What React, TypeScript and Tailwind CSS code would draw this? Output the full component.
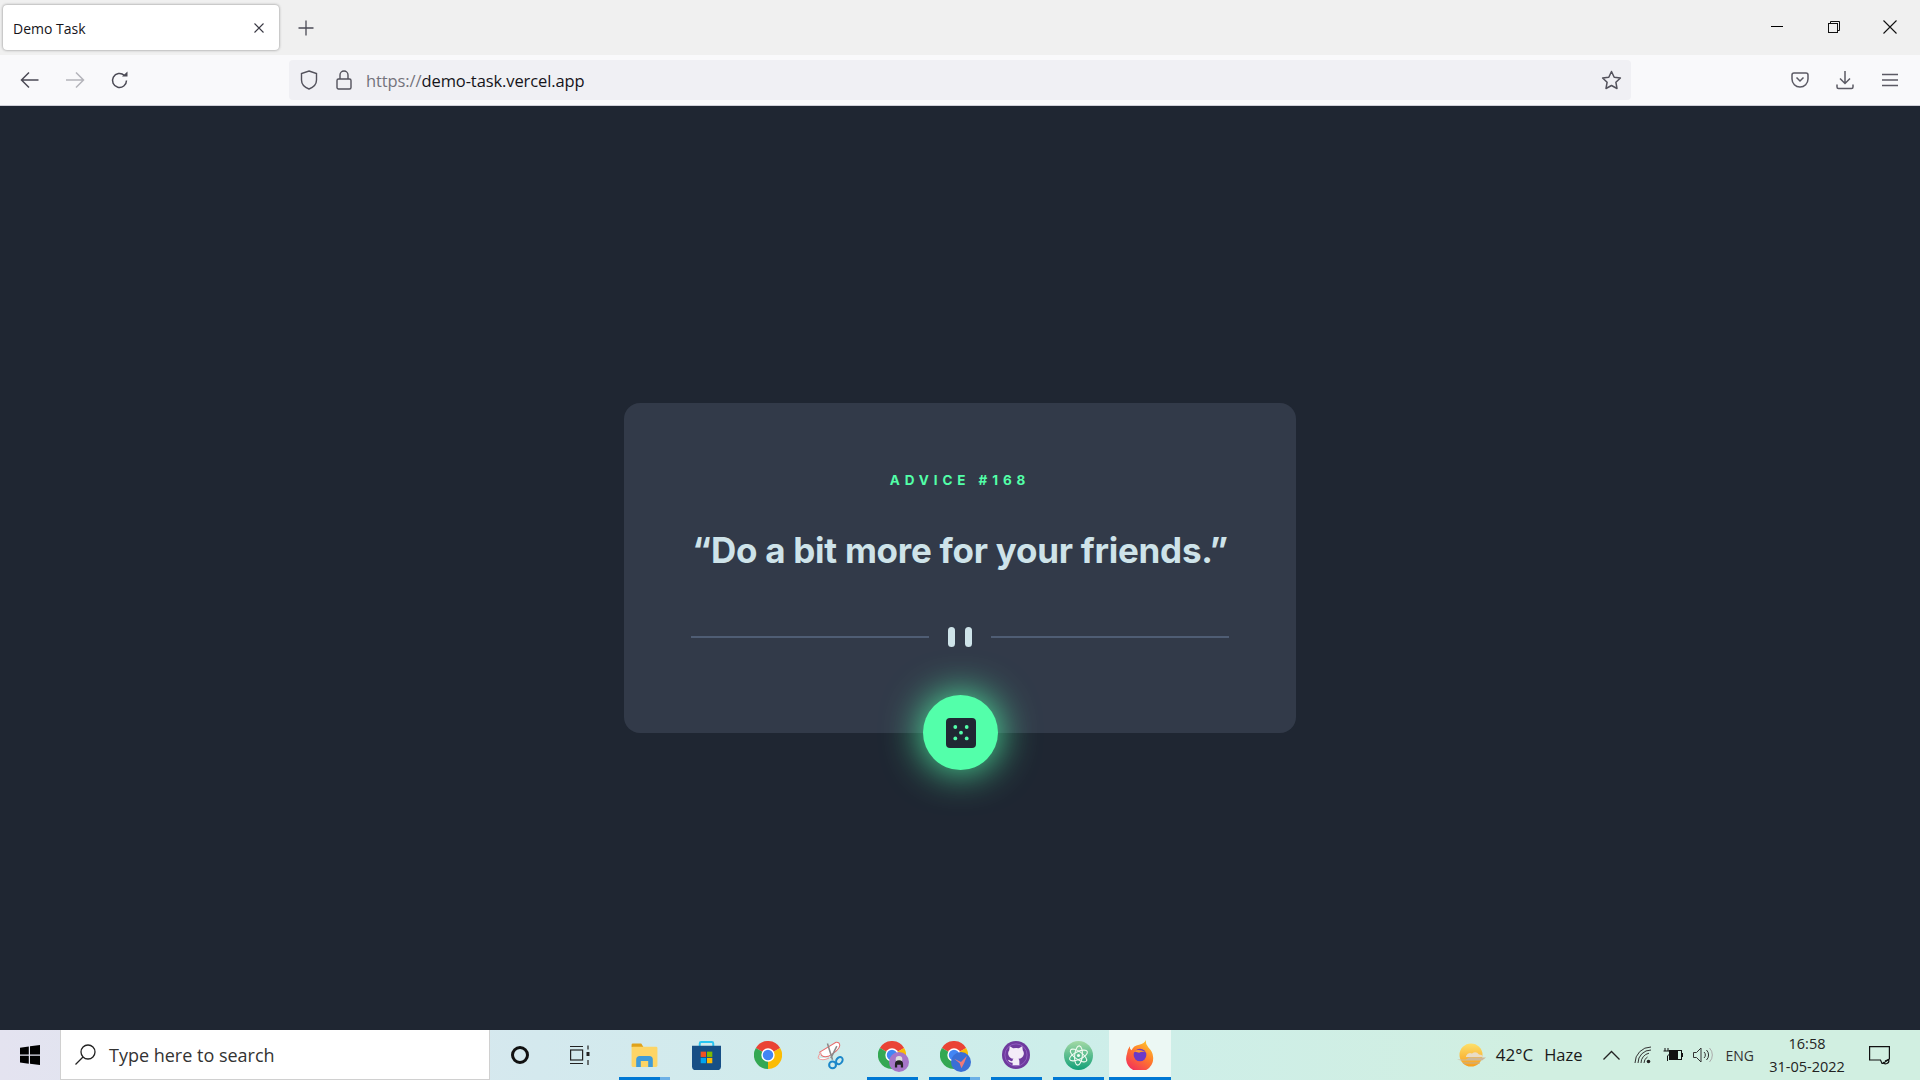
import React from "react";

const ui = "font-['Open_Sans','Noto_Sans',sans-serif]";

function Chrome({ size = 28 }: { size?: number }) {
  return (
    <svg width={size} height={size} viewBox="0 0 48 48">
      <path d="M24 24 L44.8 12 A24 24 0 0 0 3.2 12 Z" fill="#ea4335" />
      <path d="M24 24 L3.2 12 A24 24 0 0 0 24 48 Z" fill="#34a853" />
      <path d="M24 24 L24 48 A24 24 0 0 0 44.8 12 Z" fill="#fbbc04" />
      <circle cx="24" cy="24" r="11.5" fill="#fff" />
      <circle cx="24" cy="24" r="9" fill="#4285f4" />
    </svg>
  );
}

function Folder() {
  return (
    <svg width="27" height="24" viewBox="0 0 28 26">
      <path d="M0 2a1.5 1.5 0 0 1 1.5-1.5h9L13 4.5H0z" fill="#e0a21a" />
      <rect x="0" y="4" width="28" height="22" rx="1.5" fill="#fdd566" />
      <path d="M5 26v-8a4 4 0 0 1 4-4h10a4 4 0 0 1 4 4v8h-5v-6.5h-8V26z" fill="#3f9bd8" />
    </svg>
  );
}

function Store() {
  return (
    <svg width="29" height="29" viewBox="0 0 30 30">
      <path d="M8 6V2.500A1.500 1.500 0 0 1 9.500 1h11A1.500 1.500 0 0 1 22 2.500V6" fill="none" stroke="#28c5f2" strokeWidth="2" />
      <path d="M0 5h30v21a4 4 0 0 1-4 4H4a4 4 0 0 1-4-4z" fill="#174f86" />
      <rect x="9" y="11" width="5.500" height="5.500" fill="#f25022" />
      <rect x="15.500" y="11" width="5.500" height="5.500" fill="#7fba00" />
      <rect x="9" y="17.500" width="5.500" height="5.500" fill="#00a4ef" />
      <rect x="15.500" y="17.500" width="5.500" height="5.500" fill="#ffb900" />
    </svg>
  );
}

function Snip() {
  return (
    <svg width="28" height="29" viewBox="0 0 30 34">
      <path d="M3 13 L22 1.500 Q26 1 26.500 5 Q26 11 13 18 Q5 20 3 13Z" fill="#fff" stroke="#e66a6a" strokeWidth="1.200" />
      <path d="M1 20 Q2 15 5 14 M1 20 Q6 24 14 20" fill="#fff" stroke="#eba0a0" strokeWidth="1.200" />
      <path d="M12 3 L18 22 M23 6 L16 20" stroke="#8a8a8a" strokeWidth="1.800" />
      <circle cx="18" cy="28" r="4" fill="none" stroke="#1b87c9" strokeWidth="2.400" />
      <ellipse cx="26" cy="23" rx="3.400" ry="4.500" fill="none" stroke="#1b87c9" strokeWidth="2.400" transform="rotate(35 26 23)" />
    </svg>
  );
}

function ChromeBadge({ kind }: { kind: "ghost" | "bird" }) {
  return (
    <div className="relative w-[31px] h-[31px] mt-[3px] translate-x-[1px]">
      <Chrome size={28} />
      {kind === "ghost" ? (
        <svg className="absolute right-0 bottom-0" width="20" height="20" viewBox="0 0 22 22">
          <circle cx="11" cy="11" r="11" fill="#a676c8" />
          <circle cx="11" cy="8" r="3.600" fill="#ddd" />
          <path d="M6.500 17v-3.500a4.500 4.500 0 0 1 9 0V17h-2.500v-3h-4v3z" fill="#222" />
        </svg>
      ) : (
        <svg className="absolute right-0 bottom-0" width="20" height="20" viewBox="0 0 22 22">
          <circle cx="11" cy="11" r="11" fill="#3a6fd6" />
          <path d="M3.500 7.500 L11 11 L17.500 4.500 L14.500 12 L11.500 18 L9.500 12.500Z" fill="#ee7a7a" />
        </svg>
      )}
    </div>
  );
}

function Github() {
  return (
    <svg width="28" height="28" viewBox="0 0 29 29">
      <circle cx="14.500" cy="14.500" r="14.500" fill="#6e3a9e" />
      <circle cx="14.500" cy="14.500" r="11.500" fill="none" stroke="#8f5cc0" strokeWidth="1" />
      <path d="M8 5.500 L11.500 7.500 Q14.500 6.800 17.500 7.500 L21 5.500 L21.500 9.500 Q23 11.500 22.500 14 Q21.500 18 17 18.500 Q18 19.500 18 21 V25 H11 V22.500 Q7.500 23 6 19.500 Q8 20 9.500 21 L11 20.500 V20 Q11 19 12 18.500 Q7.500 18 6.500 14 Q6 11.500 7.500 9.500Z" fill="#f3ecf8" />
    </svg>
  );
}

function Atom() {
  return (
    <svg width="29" height="29" viewBox="0 0 30 30">
      <defs>
        <linearGradient id="atomg" x1="0" y1="0" x2="0" y2="1">
          <stop offset="0" stopColor="#a3d9a5" />
          <stop offset="1" stopColor="#12a078" />
        </linearGradient>
      </defs>
      <circle cx="15" cy="15" r="15" fill="url(#atomg)" />
      <g fill="none" stroke="#f2fbf2" strokeWidth="1.100">
        <ellipse cx="15" cy="15" rx="10" ry="4" transform="rotate(-25 15 15)" />
        <ellipse cx="15" cy="15" rx="10" ry="4" transform="rotate(35 15 15)" />
        <ellipse cx="15" cy="15" rx="10" ry="4" transform="rotate(95 15 15)" />
      </g>
      <circle cx="15" cy="15" r="1.600" fill="#f2fbf2" />
    </svg>
  );
}

function Firefox() {
  return (
    <svg width="28" height="30" viewBox="0 0 30 32">
      <defs>
        <linearGradient id="ffg" x1="0.800" y1="0" x2="0.200" y2="1">
          <stop offset="0" stopColor="#ffcb2e" />
          <stop offset="0.450" stopColor="#ff7a2c" />
          <stop offset="1" stopColor="#f22c5e" />
        </linearGradient>
      </defs>
      <path d="M21 0 Q21 5 24 8 Q29 13 29 18 A14.500 14 0 1 1 1 15 Q1 11 4 6.500 Q4 10 6 11 Q8 6 14 5 Q20 4 21 0Z" fill="url(#ffg)" />
      <circle cx="15" cy="16" r="6.800" fill="#6a3ac7" />
      <path d="M8 12 Q14 9 21 13 Q17 12 14 13.500 Q11 13 8 12Z" fill="#ff9a2e" />
    </svg>
  );
}

function Weather() {
  return (
    <svg width="30" height="25" viewBox="0 0 30 25">
      <defs>
        <linearGradient id="sun" x1="0" y1="0" x2="0" y2="1">
          <stop offset="0" stopColor="#fde06a" />
          <stop offset="1" stopColor="#f89e1c" />
        </linearGradient>
      </defs>
      <circle cx="14" cy="12" r="11.500" fill="url(#sun)" />
      <path d="M9 13 Q11 9 15 10.500 Q19 7.500 22 11.500 Q26 11.500 26 14 H9Z" fill="#e9dcc6" />
      <path d="M0 16.500 H9 Q12 13.500 16 14.500 H29 L25 17.500 H4Z" fill="#cdb89a" />
      <path d="M6 20 H23" stroke="#bfae94" strokeWidth="1" />
    </svg>
  );
}

function Tile({ children, bar, active }: { children: React.ReactNode; bar?: "plain" | "split"; active?: boolean }) {
  return (
    <div className={`relative w-[62px] h-full flex items-center justify-center ${active ? "bg-[#ecf8f4]" : ""}`}>
      {children}
      {bar === "plain" && <div className="absolute bottom-0 left-[6px] w-[51px] h-[3px] bg-[#0078d4]" />}
      {bar === "split" && (
        <div className="absolute bottom-0 left-[6px] w-[51px] h-[3px] flex">
          <div className="w-[41px] bg-[#0078d4]" />
          <div className="w-[10px] bg-[#6cb0e6]" />
        </div>
      )}
      {active && <div className="absolute bottom-0 inset-x-0 h-[3px] bg-[#0078d4]" />}
    </div>
  );
}

export default function App() {
  return (
    <div className={`w-full h-screen flex flex-col overflow-hidden bg-[#1f2632] ${ui}`}>
      {/* Tab strip */}
      <div className="h-[55px] shrink-0 bg-[#f0f0f0] flex items-start">
        <div className="mt-[5px] ml-[3px] w-[276px] h-[45px] bg-white rounded-[4px] shadow-[0_0_3px_rgba(0,0,0,0.45)] flex items-center pl-[10px] pr-[14px] justify-between">
          <span className="text-[14px] text-[#15141a] pt-[1px]">Demo Task</span>
          <svg width="12" height="12" viewBox="0 0 12 12" className="text-[#3a3944]">
            <path d="M1.500 1.500l9 9M10.500 1.500l-9 9" stroke="currentColor" strokeWidth="1.100" />
          </svg>
        </div>
        <div className="mt-[5px] ml-[10px] h-[45px] w-[34px] flex items-center justify-center">
          <svg width="16" height="16" viewBox="0 0 16 16">
            <path d="M8 0.500v15M0.500 8h15" stroke="#4a4a55" strokeWidth="1.300" />
          </svg>
        </div>
        <div className="ml-auto h-[53px] flex items-center pr-[2px]">
          <div className="w-[57px] flex justify-center">
            <div className="w-[12px] h-[1px] bg-black" />
          </div>
          <div className="w-[57px] flex justify-center">
            <svg width="12" height="12" viewBox="0 0 12 12" fill="none" stroke="#111" strokeWidth="1">
              <rect x="0.500" y="2.500" width="9" height="9" />
              <path d="M2.500 2.500v-2h9v9h-2" />
            </svg>
          </div>
          <div className="w-[56px] flex justify-center">
            <svg width="14" height="14" viewBox="0 0 14 14" stroke="#111" strokeWidth="1.100">
              <path d="M0.500 0.500l13 13M13.500 0.500l-13 13" />
            </svg>
          </div>
        </div>
      </div>

      {/* Navigation bar */}
      <div className="h-[51px] shrink-0 bg-[#f9f9fb] border-b border-[#cfcfd8] flex items-center">
        <div className="w-[289px] flex items-center pl-[20px]">
          <svg width="20" height="18" viewBox="0 0 20 18" fill="none" stroke="#4b4a55" strokeWidth="1.500">
            <path d="M1.500 9h17M9 1.500L1.500 9 9 16.500" />
          </svg>
          <svg className="ml-[25px]" width="20" height="18" viewBox="0 0 20 18" fill="none" stroke="#b4b4ba" strokeWidth="1.500">
            <path d="M1 9h17M11 1.500L18.500 9 11 16.500" />
          </svg>
          <svg className="ml-[25px]" width="19" height="19" viewBox="0 0 19 19" fill="none" stroke="#4b4a55" strokeWidth="1.500">
            <path d="M16.500 9.500a7 7 0 1 1-2.200-5.100" />
            <path d="M12 5.500h5.500V0.500z" fill="#4b4a55" stroke="none" />
          </svg>
        </div>
        <div className="w-[1342px] h-[40px] bg-[#f0f0f4] rounded-[4px] flex items-center pl-[11px] pr-[9px]">
          <svg width="18" height="20" viewBox="0 0 18 20" fill="none" stroke="#53525c" strokeWidth="1.400">
            <path d="M9 1l7.500 2.500V10c0 4.500-3.500 7.500-7.500 9-4-1.500-7.500-4.500-7.500-9V3.500z" />
          </svg>
          <svg className="ml-[18px]" width="16" height="20" viewBox="0 0 16 20" fill="none" stroke="#53525c" strokeWidth="1.400">
            <rect x="1" y="9" width="14" height="10" rx="1.500" />
            <path d="M4 9V5a4 4 0 0 1 8 0v4" />
          </svg>
          <div className="ml-[14px] pt-[2px] text-[16.500px] text-[#15141a] tracking-[-0.100px]">
            <span className="text-[#74737c]">https://</span>demo-task.vercel.app
          </div>
          <svg className="ml-auto" width="21" height="20" viewBox="0 0 21 20" fill="none" stroke="#53525c" strokeWidth="1.500" strokeLinejoin="round">
            <path d="M10.500 1.500l2.700 5.700 6.200.8-4.500 4.300 1.100 6.200-5.500-3-5.500 3 1.100-6.200L1.600 8l6.200-.8z" />
          </svg>
        </div>
        <div className="flex-1 flex items-center pl-[160px]">
          <svg width="18" height="16" viewBox="0 0 18 16" fill="none" stroke="#5b5a64" strokeWidth="1.500">
            <path d="M1 3a2 2 0 0 1 2-2h12a2 2 0 0 1 2 2v4a8 8 0 0 1-16 0z" />
            <path d="M5.500 5.500L9 9l3.500-3.500" />
          </svg>
          <svg className="ml-[27px]" width="18" height="20" viewBox="0 0 18 20" fill="none" stroke="#5b5a64" strokeWidth="1.500">
            <path d="M9 1v12M4 8.500L9 13.500l5-5" />
            <path d="M1 14.500v2.500a1.500 1.500 0 0 0 1.500 1.500h13a1.500 1.500 0 0 0 1.500-1.500v-2.500" />
          </svg>
          <svg className="ml-[28px]" width="16" height="14" viewBox="0 0 16 14" stroke="#5b5a64" strokeWidth="1.500">
            <path d="M0 1.500h16M0 7h16M0 12.500h16" />
          </svg>
        </div>
      </div>

      {/* Page */}
      <main className="flex-1 flex items-center justify-center bg-[#1f2632]">
        <div className="relative w-[672px] h-[330px] rounded-[16px] bg-[#323a49] flex flex-col items-center font-['Inter',sans-serif]">
          <div className="mt-[68px] text-[13.500px] leading-[18px] font-bold tracking-[4.900px] text-[#52ffa8]">ADVICE #168</div>
          <div className="mt-[36px] text-[35px] leading-[50px] font-bold tracking-[-0.250px] text-[#cee3e9]">“Do a bit more for your friends.”</div>
          <div className="mt-[52px] w-[538px] flex items-center justify-between">
            <div className="w-[238px] h-[2px] bg-[#4f5d74]" />
            <div className="flex gap-[10px]">
              <div className="w-[7px] h-[20px] rounded-[4px] bg-[#cee3e9]" />
              <div className="w-[7px] h-[20px] rounded-[4px] bg-[#cee3e9]" />
            </div>
            <div className="w-[238px] h-[2px] bg-[#4f5d74]" />
          </div>
          <button className="absolute bottom-[-37px] left-[299px] w-[75px] h-[75px] rounded-full bg-[#53ffaa] shadow-[0_0_40px_0_#53ffaa] flex items-center justify-center">
            <svg width="30" height="30" viewBox="0 0 30 30">
              <rect width="30" height="30" rx="4" fill="#202733" />
              <circle cx="9.300" cy="9" r="1.900" fill="#53ffaa" />
              <circle cx="20.700" cy="9" r="1.900" fill="#53ffaa" />
              <circle cx="15" cy="14.700" r="1.900" fill="#53ffaa" />
              <circle cx="9.300" cy="20.400" r="1.900" fill="#53ffaa" />
              <circle cx="20.700" cy="20.400" r="1.900" fill="#53ffaa" />
            </svg>
          </button>
        </div>
      </main>

      {/* Taskbar */}
      <div className="h-[50px] shrink-0 flex items-stretch bg-[linear-gradient(90deg,#e4e3f0_0%,#d4e9ee_28%,#cdeeea_55%,#d1efe1_80%,#d1efe1_100%)]">
        <div className="w-[60px] flex items-center justify-center">
          <svg width="20" height="20" viewBox="0 0 20 20" fill="#000">
            <path d="M0 2.800L8.800 1.500V9.500H0zM10 1.300L20 0V9.500H10zM0 10.700H8.800V18.700L0 17.400zM10 10.700H20V20L10 18.700z" />
          </svg>
        </div>
        <div className="w-[430px] bg-white border-x border-b border-[#d0d0d0] flex items-center pl-[14px]">
          <svg width="21" height="21" viewBox="0 0 21 21" fill="none" stroke="#222" strokeWidth="1.300">
            <circle cx="13" cy="8" r="7" />
            <path d="M8 13l-7.500 7.500" />
          </svg>
          <span className="ml-[13px] text-[18px] text-[#333] pt-[1px]">Type here to search</span>
        </div>
        <div className="w-[60px] flex items-center justify-center">
          <div className="w-[18px] h-[18px] rounded-full border-[3px] border-[#111]" />
        </div>
        <div className="w-[63px] flex items-center justify-center pr-[4px]">
          <svg width="20" height="20" viewBox="0 0 20 20" fill="none" stroke="#222" strokeWidth="1.200">
            <path d="M0 1.500h13M0 18.500h13" />
            <rect x="0.600" y="5" width="12" height="10" />
            <path d="M18 0.500v4M18 15v5" />
            <rect x="16.500" y="7" width="3" height="4" fill="#222" stroke="none" />
          </svg>
        </div>
        <Tile bar="split"><Folder /></Tile>
        <Tile><Store /></Tile>
        <Tile><Chrome size={28} /></Tile>
        <Tile><Snip /></Tile>
        <Tile bar="plain"><ChromeBadge kind="ghost" /></Tile>
        <Tile bar="split"><ChromeBadge kind="bird" /></Tile>
        <Tile bar="plain"><Github /></Tile>
        <Tile bar="plain"><Atom /></Tile>
        <Tile active><Firefox /></Tile>

        <div className="ml-auto flex items-center text-[#1a1a1a] pr-[30px]">
          <Weather />
          <span className="ml-[9px] text-[17px]">42°C</span>
          <span className="ml-[11px] text-[16.500px]">Haze</span>
          <svg className="ml-[20px]" width="17" height="10" viewBox="0 0 17 10" fill="none" stroke="#222" strokeWidth="1.300">
            <path d="M0.500 9.500L8.500 1.500l8 8" />
          </svg>
          <svg className="ml-[14px]" width="18" height="18" viewBox="0 0 18 18" fill="none" stroke="#333" strokeWidth="1">
            <path d="M1 17a16 16 0 0 1 16-16M4 17a13 13 0 0 1 13-13M7 17a10 10 0 0 1 8-9.800M10 17a7 7 0 0 1 3.500-6" />
            <circle cx="14.500" cy="15.500" r="1.800" fill="#222" stroke="none" />
          </svg>
          <svg className="ml-[11px]" width="20" height="14" viewBox="0 0 20 14">
            <path d="M2 0v3M5 0v3M0.500 3h6v3l-2 2v5" fill="none" stroke="#111" strokeWidth="1" />
            <rect x="6.500" y="2.500" width="12" height="9" fill="none" stroke="#111" strokeWidth="1" />
            <rect x="7" y="3" width="8" height="8" fill="#111" />
            <rect x="19" y="5" width="1" height="4" fill="#111" />
          </svg>
          <svg className="ml-[10px]" width="20" height="16" viewBox="0 0 20 16" fill="none" stroke="#333" strokeWidth="1">
            <path d="M0.500 5.500h3L8 1v14l-4.500-4.500h-3z" />
            <path d="M11 5a4 4 0 0 1 0 6M13.500 3a7 7 0 0 1 0 10" />
            <path d="M16.500 1a10 10 0 0 1 0 14" stroke="#aaa" />
          </svg>
          <span className="ml-[13px] text-[14px] text-[#333]">ENG</span>
          <div className="ml-[14px] w-[78px] flex flex-col items-center text-[14.500px] leading-[23px] text-[#222]">
            <span>16:58</span>
            <span>31-05-2022</span>
          </div>
          <svg className="ml-[23px]" width="21" height="19" viewBox="0 0 21 19" fill="none" stroke="#111" strokeWidth="1.200">
            <path d="M0.600 0.600H20.400V13L14 17.500H13L11.500 14H0.600z" />
            <path d="M14 16a3 3 0 0 0 5.500-2.500L16 15" />
          </svg>
        </div>
      </div>
    </div>
  );
}
